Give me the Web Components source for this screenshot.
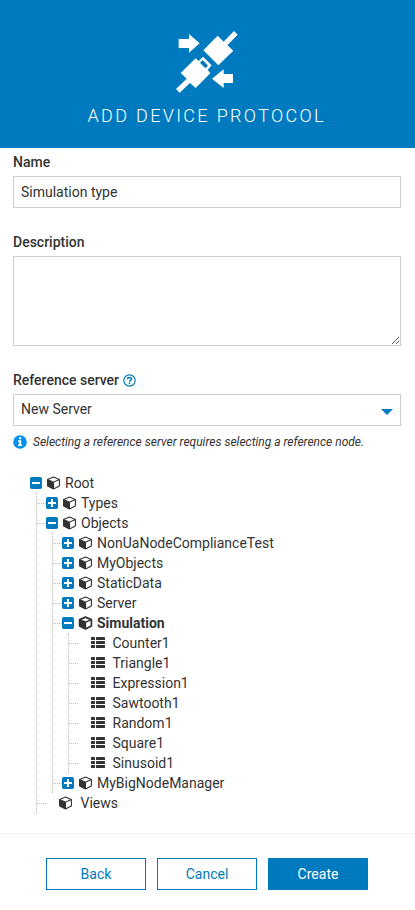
<!DOCTYPE html>
<html lang="en">
<head>
<meta charset="utf-8">
<title>Add device protocol</title>
<style>
body{margin:0;background:#fff;color:#333;font:14px/20px Roboto,"Liberation Sans",sans-serif}
</style>
</head>
<body>
<protocol-dialog></protocol-dialog>
<script>
const define = (name, html, setup) => customElements.define(name, class extends HTMLElement {
  connectedCallback() {
    if (this.shadowRoot) return;
    const root = this.attachShadow({mode: 'open'});
    const t = document.createElement('template');
    t.innerHTML = html;
    root.append(t.content.cloneNode(true));
    if (setup) setup(this, root);
  }
});

define('dialog-header', `
<style>
:host{display:flex;flex-direction:column;align-items:center;box-sizing:border-box;height:148px;padding:31px 1px 0 0;background:#007abf;color:#fff}
svg{display:block;width:62px;height:62px}
h1{margin:11px 0 0;font-weight:300;font-size:18px;line-height:24px;letter-spacing:2.34px;padding-right:.6px;text-transform:uppercase;white-space:nowrap}
</style>
<svg viewBox="33 33 186 186" fill="#fff">
<path d="M41 57H72V42L104 70L72 98V84H41Z"/>
<path d="M204 162H176V148L141 176L176 204V189H204Z"/>
<path d="M115 91L158 47L176 65L207 33L218 44L187 76L205 92L160 136Z"/>
<path fill-rule="evenodd" d="M47 159L92 115L101 123L114 110L140 136L128 149L136 160L92 204L75 189L44 218L33 207L65 176ZM105 128L113 120L129 137L121 145Z"/>
</svg>
<h1><slot></slot></h1>`);

define('help-icon', `
<style>:host{display:inline-block;width:13px;height:13px;margin-left:4px;vertical-align:-2px}svg{display:block}</style>
<svg width="13" height="13" viewBox="-.2 -.2 12.4 12.4" fill="none" stroke="#007abf"><circle cx="6" cy="6" r="5.4" stroke-width="1.1"/><path d="M4.1 4.7C4.1 2.7 7.9 2.6 7.9 4.6C7.9 5.8 6 5.8 6 7.2M6 8V9.3" stroke-width="1.5"/></svg>`);

define('form-field', `
<style>
:host{display:block;margin-bottom:24px}
.label{display:block;height:20px;margin-bottom:4px;font-weight:500}
</style>
<div class="label"><slot name="label"></slot></div><slot></slot>`);

define('text-box', `
<style>
:host{display:block}
input,textarea{display:block;box-sizing:border-box;width:100%;margin:0;border:1px solid #c8ced2;border-radius:0;padding:5px 7px;background:#fff;color:#333;font:inherit;outline:0}
input{height:32px}textarea{height:90px;resize:vertical}
</style>`, (host, root) => {
  const el = document.createElement(host.hasAttribute('multiline') ? 'textarea' : 'input');
  el.value = host.getAttribute('value') || '';
  root.append(el);
});

define('select-box', `
<style>
:host{display:flex;justify-content:space-between;align-items:center;box-sizing:border-box;height:32px;border:1px solid #c8ced2;padding:0 7px}
span{margin-top:-2px}svg{margin-top:3px}
</style>
<span><slot></slot></span><svg width="12" height="6" viewBox="0 0 12 6"><path d="M0 0H12L6 6Z" fill="#007abf"/></svg>`);

define('info-note', `
<style>
:host{display:flex;align-items:center;gap:6px;height:20px;margin-top:6px;font-size:12px;font-style:italic;white-space:nowrap}
</style>
<svg width="14" height="14" viewBox="0 0 14 14"><circle cx="7" cy="7" r="6.8" fill="#0091ea"/><path fill="#fff" d="M6 2.3H8.2V4.3H6ZM5 5.3H8.2V9.6H9.2V11.1H5V9.6H6V6.8H5Z"/></svg>
<span><slot></slot></span>`);

define('tree-node', `
<style>
:host{display:block}
.row{display:flex;align-items:center;height:20px;white-space:nowrap}
.line{width:9px;border-top:1px dotted #bbb;margin-top:1px}
:host([root]) .line{display:none}
.toggle{width:12px;height:12px;margin-right:5px}
.space{width:13px}
svg{display:block;flex:none}
.label{margin-left:5px}
:host([leaf]) .label{margin-left:8.5px}
:host([leaf][icon=list]) .label{margin-left:7.5px}
:host([bold]) .label{font-weight:700}
.kids{margin-left:15px;border-left:1px dotted #bbb}
:host([root]) .kids{margin-left:6px}
:host(:not([open])) .kids{display:none}
</style>
<div class="row"><span class="line"></span><span class="lead"></span><span class="icon"></span><span class="label"></span></div>
<div class="kids"><slot></slot></div>`, (host, root) => {
  const lead = root.querySelector('.lead');
  if (host.hasAttribute('leaf')) lead.className = 'space';
  else {
    lead.className = 'toggle';
    lead.innerHTML = `<svg width="12" height="12" viewBox="0 0 12 12"><rect width="12" height="12" rx="1.7" fill="#007abf"/><path d="M2 6H10${host.hasAttribute('open') ? '' : 'M6 2V10'}" stroke="#fff" stroke-width="2"/></svg>`;
  }
  root.querySelector('.icon').innerHTML = host.getAttribute('icon') === 'list'
    ? '<svg width="14" height="12" viewBox="0 0 14 12" fill="#333"><rect width="4" height="3" y="0" rx=".6"/><rect x="5" width="9" height="3" rx=".6"/><rect y="4" width="4" height="3" rx=".6"/><rect x="5" y="4" width="9" height="3" rx=".6"/><rect y="8" width="4" height="3" rx=".6"/><rect x="5" y="8" width="9" height="3" rx=".6"/></svg>'
    : `<svg width="13" height="14" viewBox="0 0 13 14" overflow="visible"><path d="M.6 3.6L6.5 1.1L12.4 3.6V9.9L6.5 13L.6 9.9Z" fill="#fff" stroke="#333" stroke-width="${host.hasAttribute('bold') ? 1.7 : 1.1}" stroke-linejoin="round"/><path d="M.6 3.6L6.5 6.2V13L.6 9.9Z" fill="#333"/><path d="M.6 3.6L6.5 6.2L12.4 3.6M6.5 6.2V13" fill="none" stroke="#333" stroke-width="${host.hasAttribute('bold') ? 1.4 : 1.1}"/></svg>`;
  root.querySelector('.label').textContent = host.getAttribute('label');
});

define('action-button', `
<style>
:host{display:block}
button{display:block;box-sizing:border-box;width:100px;height:32px;border:1px solid #007abf;padding:0;background:#fff;color:#007abf;font:inherit}
:host([primary]) button{background:#007abf;color:#fff}
</style><button><slot></slot></button>`);

define('protocol-dialog', `
<style>
:host{display:block;height:910px;overflow:hidden}
main{padding:4px 14px 0 13px}
form-field:last-of-type{margin-bottom:0}
.tree{margin:21px 0 0 17px}
footer{display:flex;gap:11px;justify-content:center;margin-top:20px;padding:24px 1px 0 0;border-top:1px solid #eee}
</style>
<dialog-header>Add device protocol</dialog-header>
<main>
<form-field><span slot="label">Name</span><text-box value="Simulation type"></text-box></form-field>
<form-field><span slot="label">Description</span><text-box multiline></text-box></form-field>
<form-field><span slot="label">Reference server<help-icon></help-icon></span><select-box>New Server</select-box></form-field>
<info-note>Selecting a reference server requires selecting a reference node.</info-note>
<div class="tree">
<tree-node root open label="Root">
<tree-node label="Types"></tree-node>
<tree-node open label="Objects">
<tree-node label="NonUaNodeComplianceTest"></tree-node>
<tree-node label="MyObjects"></tree-node>
<tree-node label="StaticData"></tree-node>
<tree-node label="Server"></tree-node>
<tree-node open bold label="Simulation">
<tree-node leaf icon="list" label="Counter1"></tree-node>
<tree-node leaf icon="list" label="Triangle1"></tree-node>
<tree-node leaf icon="list" label="Expression1"></tree-node>
<tree-node leaf icon="list" label="Sawtooth1"></tree-node>
<tree-node leaf icon="list" label="Random1"></tree-node>
<tree-node leaf icon="list" label="Square1"></tree-node>
<tree-node leaf icon="list" label="Sinusoid1"></tree-node>
</tree-node>
<tree-node label="MyBigNodeManager"></tree-node>
</tree-node>
<tree-node leaf label="Views"></tree-node>
</tree-node>
</div>
</main>
<footer><action-button>Back</action-button><action-button>Cancel</action-button><action-button primary>Create</action-button></footer>`);
</script>
</body>
</html>
